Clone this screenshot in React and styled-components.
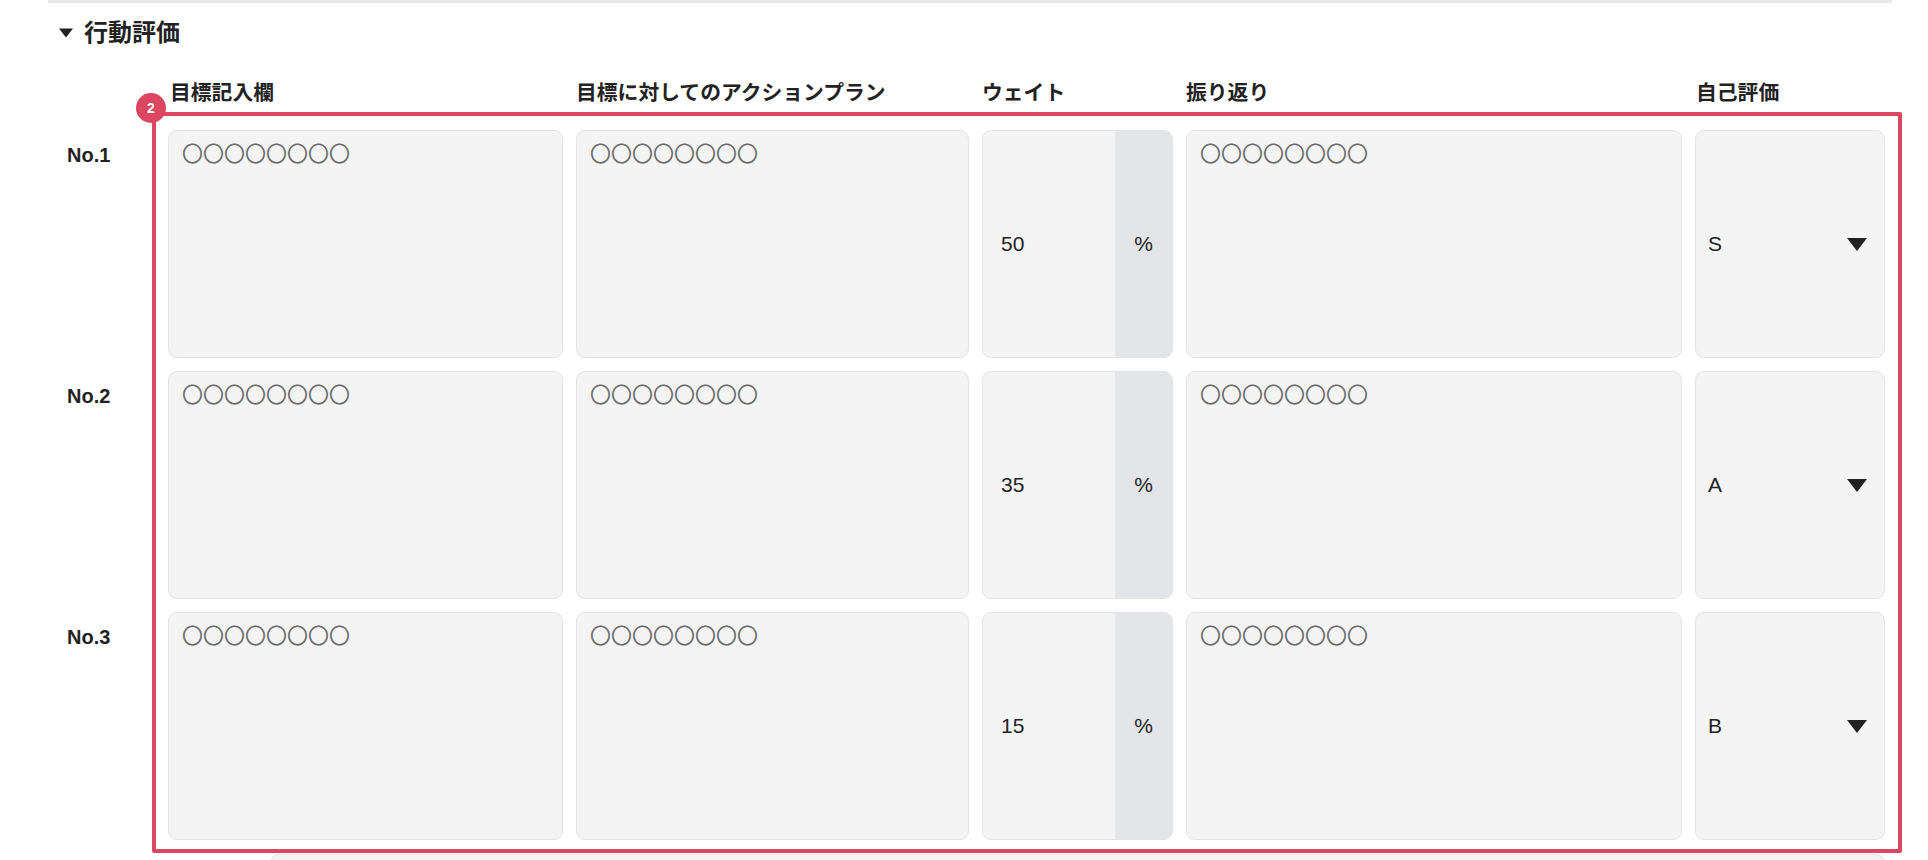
import { Fragment } from "react";
import styled, { createGlobalStyle } from "styled-components";

const GlobalStyle = createGlobalStyle`
  body {
    margin: 0;
    background: #fff;
    color: #222;
    font-family: "Liberation Sans", "Noto Sans CJK JP", sans-serif;
  }
`;

const Page = styled.div`
  width: 1928px;
  height: 860px;
  overflow: hidden;
`;

const TopRule = styled.div`
  height: 3px;
  margin: 0 36px 0 48px;
  background: #e8e8e8;
`;

const SectionTitle = styled.h2`
  display: flex;
  align-items: center;
  gap: 11px;
  margin: 0;
  padding: 18px 0 0 59px;
  font-size: 24px;
  line-height: 24px;
  font-weight: 700;
  color: #222;
`;

const columns = "155px 395px 393px 191px 496px 190px";

const HeadRow = styled.div`
  display: grid;
  grid-template-columns: ${columns};
  column-gap: 13px;
  margin-top: 38px;
`;

const HeadCell = styled.div`
  font-size: 20.8px;
  line-height: 20px;
  font-weight: 700;
  padding-left: ${(p) => p.$indent || 0}px;
`;

const Body = styled.div`
  position: relative;
  display: grid;
  grid-template-columns: ${columns};
  grid-auto-rows: 228px;
  gap: 13px;
  margin-top: 27px;
`;

const Frame = styled.div`
  position: absolute;
  top: -18px;
  bottom: -13px;
  left: 152px;
  width: 1750px;
  box-sizing: border-box;
  border: 4px solid #db4661;
  border-radius: 2px;
  pointer-events: none;
`;

const Badge = styled.span`
  position: absolute;
  top: -23px;
  left: -20px;
  width: 30px;
  height: 30px;
  border-radius: 50%;
  background: #db4661;
  color: #fff;
  font-size: 14px;
  font-weight: 700;
  display: flex;
  align-items: center;
  justify-content: center;
`;

const RowLabel = styled.div`
  padding: 10px 0 0 67px;
  font-size: 20px;
  line-height: 30px;
  font-weight: 700;
`;

const TextBox = styled.textarea`
  box-sizing: border-box;
  width: 100%;
  height: 100%;
  margin: 0;
  padding: 6px 13px;
  resize: none;
  border: 1.5px solid #e3e3e6;
  border-radius: 9px;
  background: #f4f4f5;
  color: #6a6a6a;
  font-family: "Noto Sans CJK JP", sans-serif;
  font-size: 21px;
  line-height: 30px;
  outline: none;
`;

const WeightBox = styled.div`
  display: flex;
  box-sizing: border-box;
  border: 1.5px solid #e3e3e6;
  border-radius: 9px;
  background: #f4f4f5;
  overflow: hidden;
`;

const WeightValue = styled.div`
  flex: 1;
  display: flex;
  align-items: center;
  padding-left: 18px;
  font-size: 21px;
`;

const Suffix = styled.div`
  width: 57px;
  display: flex;
  align-items: center;
  justify-content: center;
  background: #e4e5e9;
  font-size: 21px;
`;

const SelectBox = styled.div`
  display: flex;
  align-items: center;
  justify-content: space-between;
  box-sizing: border-box;
  padding: 0 17px 0 12px;
  border: 1.5px solid #e3e3e6;
  border-radius: 9px;
  background: #f4f4f5;
  font-size: 21px;
`;

const NextField = styled.div`
  box-sizing: border-box;
  width: 1615px;
  height: 120px;
  margin: 14px 0 0 270px;
  border: 1.5px solid #e3e3e6;
  border-radius: 9px;
  background: #f4f4f5;
`;

const Caret = ({ w, h }) => (
  <svg width={w} height={h} viewBox="0 0 20 13">
    <polygon points="0,0 20,0 10,13" fill="#222" />
  </svg>
);

const rows = [
  { no: "No.1", weight: "50", grade: "S" },
  { no: "No.2", weight: "35", grade: "A" },
  { no: "No.3", weight: "15", grade: "B" },
];

const circles = "〇〇〇〇〇〇〇〇";

export default function App() {
  return (
    <Page>
      <GlobalStyle />
      <TopRule />
      <SectionTitle>
        <Caret w={14} h={10} />
        行動評価
      </SectionTitle>
      <HeadRow>
        <HeadCell />
        <HeadCell $indent={2}>目標記入欄</HeadCell>
        <HeadCell>目標に対してのアクションプラン</HeadCell>
        <HeadCell>ウェイト</HeadCell>
        <HeadCell>振り返り</HeadCell>
        <HeadCell $indent={1}>自己評価</HeadCell>
      </HeadRow>
      <Body>
        {rows.map((r) => (
          <Fragment key={r.no}>
            <RowLabel>{r.no}</RowLabel>
            <TextBox readOnly defaultValue={circles} />
            <TextBox readOnly defaultValue={circles} />
            <WeightBox>
              <WeightValue>{r.weight}</WeightValue>
              <Suffix>%</Suffix>
            </WeightBox>
            <TextBox readOnly defaultValue={circles} />
            <SelectBox>
              <span>{r.grade}</span>
              <Caret w={20} h={13} />
            </SelectBox>
          </Fragment>
        ))}
        <Frame>
          <Badge>2</Badge>
        </Frame>
      </Body>
      <NextField />
    </Page>
  );
}
